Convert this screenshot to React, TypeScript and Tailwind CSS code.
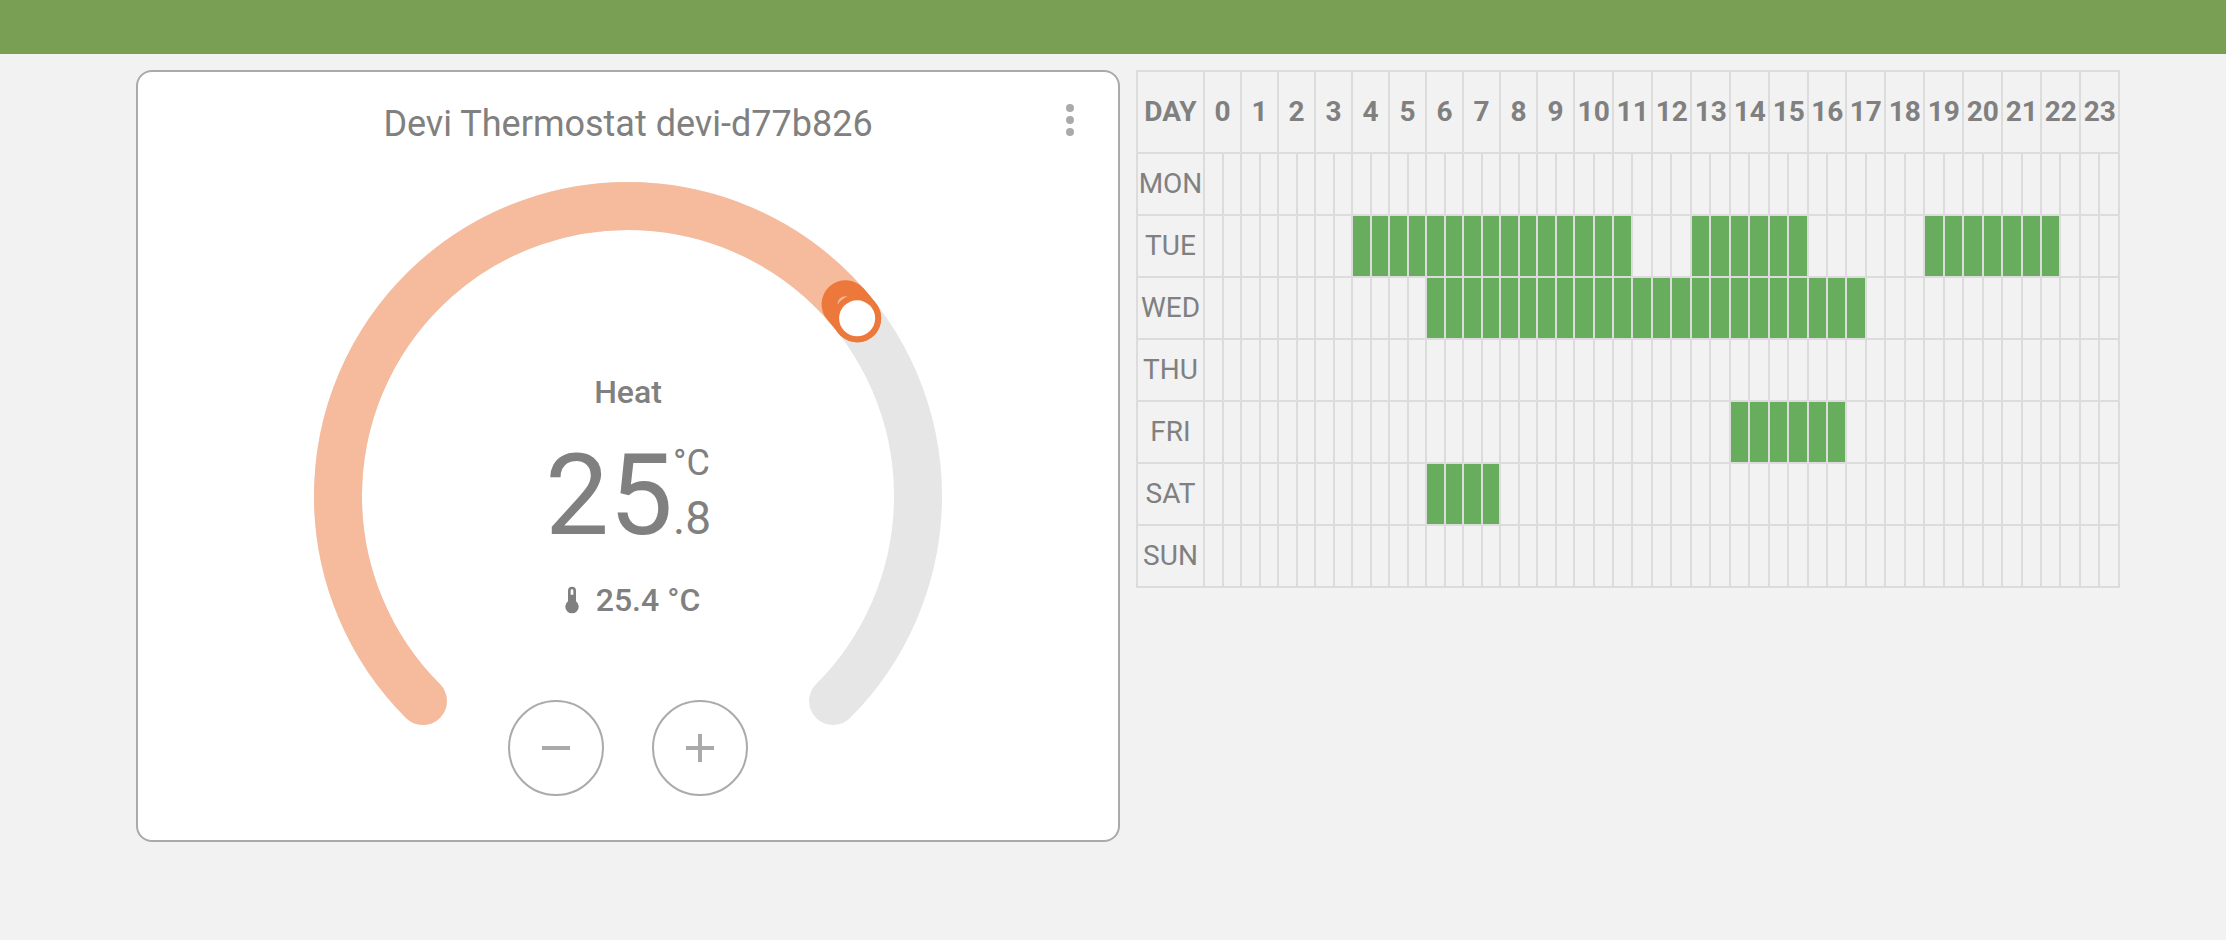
import React from "react";

const DAYS = ["MON", "TUE", "WED", "THU", "FRI", "SAT", "SUN"];
const HOURS = Array.from({ length: 24 }, (_, h) => h);

// Heating periods as [from, to) in half hours since midnight
const PERIODS: Record<string, [number, number][]> = {
  TUE: [[8, 23], [26, 32], [38, 45]],
  WED: [[12, 35]],
  FRI: [[28, 34]],
  SAT: [[12, 16]],
};

const isOn = (day: string, slot: number) =>
  (PERIODS[day] ?? []).some(([from, to]) => slot >= from && slot < to);

const MIN = 5;
const MAX = 35;
const TARGET = 25.8;
const CURRENT = 25.4;
const RADIUS = 145;

function point(value: number) {
  const angle = ((135 + (270 * (value - MIN)) / (MAX - MIN)) * Math.PI) / 180;
  return { x: 160 + RADIUS * Math.cos(angle), y: 160 + RADIUS * Math.sin(angle) };
}

function arc(from: number, to: number) {
  const a = point(from);
  const b = point(to);
  const large = (270 * (to - from)) / (MAX - MIN) > 180 ? 1 : 0;
  return `M ${a.x} ${a.y} A ${RADIUS} ${RADIUS} 0 ${large} 1 ${b.x} ${b.y}`;
}

function Dial() {
  const target = point(TARGET);
  const current = point(CURRENT);
  return (
    <svg viewBox="0 0 320 320" className="col-start-1 row-start-1 w-full" fill="none" strokeLinecap="round" strokeWidth="24" aria-hidden="true">
      <path d={arc(MIN, MAX)} stroke="#e6e6e6" />
      <path d={arc(MIN, TARGET)} stroke="#f6bb9d" />
      <path d={arc(CURRENT, TARGET)} stroke="#ed783b" />
      <circle cx={current.x} cy={current.y} r="4" fill="#f6bb9d" stroke="none" />
      <circle cx={target.x} cy={target.y} r="12" fill="#ed783b" stroke="none" />
      <circle cx={target.x} cy={target.y} r="9" fill="#ffffff" stroke="none" />
    </svg>
  );
}

function Icon({ d, className }: { d: string; className: string }) {
  return (
    <svg viewBox="0 0 24 24" fill="currentColor" className={className} aria-hidden="true">
      <path d={d} />
    </svg>
  );
}

function RoundButton({ label, d }: { label: string; d: string }) {
  return (
    <button type="button" aria-label={label} className="flex size-24 items-center justify-center rounded-full border-2 border-[#aaaaaa] text-[#aaaaaa]">
      <Icon d={d} className="size-12" />
    </button>
  );
}

function ThermostatCard() {
  return (
    <section className="relative flex flex-col items-center gap-7 rounded-2xl border-2 border-[#aaaaaa] bg-white px-6 pt-7 pb-6">
      <h2 className="text-4xl leading-[48px]">Devi Thermostat devi-d77b826</h2>
      <button type="button" aria-label="More options" className="absolute top-0 right-0 flex size-24 items-center justify-center text-[#aaaaaa]">
        <Icon
          className="size-12"
          d="M12 16a2 2 0 0 1 2 2a2 2 0 0 1-2 2a2 2 0 0 1-2-2a2 2 0 0 1 2-2m0-6a2 2 0 0 1 2 2a2 2 0 0 1-2 2a2 2 0 0 1-2-2a2 2 0 0 1 2-2m0-6a2 2 0 0 1 2 2a2 2 0 0 1-2 2a2 2 0 0 1-2-2a2 2 0 0 1 2-2Z"
        />
      </button>
      <div className="grid w-full max-w-[640px]">
        <Dial />
        <div className="z-10 col-start-1 row-start-1 flex flex-col items-center justify-center gap-[26px]">
          <p className="text-[32px] leading-[40px] font-medium">Heat</p>
          <p className="flex items-center pb-0.5">
            <span className="text-[114px] leading-[114px]">25</span>
            <span className="flex flex-col gap-[14px] pb-1">
              <span className="text-4xl leading-9">°C</span>
              <span className="text-[46px] leading-[46px]">.8</span>
            </span>
          </p>
          <p className="flex items-center gap-2 text-[32px] leading-[40px] font-medium">
            <Icon
              className="size-8"
              d="M15 13V5A3 3 0 0 0 9 5V13A5 5 0 1 0 15 13M12 4A1 1 0 0 1 13 5V8H11V5A1 1 0 0 1 12 4Z"
            />
            25.4 °C
          </p>
        </div>
        <div className="z-10 col-start-1 row-start-1 flex gap-12 self-end justify-self-center pb-5">
          <RoundButton label="Decrease temperature" d="M19 13H5V11H19V13Z" />
          <RoundButton label="Increase temperature" d="M19 13H13V19H11V13H5V11H11V5H13V11H19V13Z" />
        </div>
      </div>
    </section>
  );
}

// Two-digit hours need slightly wider columns
function slotWidth(slot: number) {
  if (slot < 20) return slot % 2 ? "w-[18px]" : "w-[19px]";
  if (slot === 32 || slot === 33) return "w-[19px]";
  const wideFirst = slot < 22 || (slot >= 34 && slot < 44);
  return (slot % 2 === 0) === wideFirst ? "w-[20px]" : "w-[19px]";
}

function Schedule() {
  const line = "border-[#dcdcdc] border-r-2 border-b-2 p-0";
  return (
    <table className="w-full table-fixed border-separate border-spacing-0 text-center text-[28px] leading-8">
      <colgroup>
        <col className="w-[69px]" />
        {Array.from({ length: 48 }, (_, slot) => (
          <col key={slot} className={slotWidth(slot)} />
        ))}
      </colgroup>
      <thead>
        <tr className="h-[84px]">
          <th scope="col" className={`${line} border-t-2 border-l-2 font-bold`}>DAY</th>
          {HOURS.map((h) => (
            <th key={h} scope="col" colSpan={2} className={`${line} border-t-2 font-bold`}>{h}</th>
          ))}
        </tr>
      </thead>
      <tbody>
        {DAYS.map((day) => (
          <tr key={day} className="h-[62px]">
            <th scope="row" className={`${line} border-l-2 font-normal`}>{day}</th>
            {Array.from({ length: 48 }, (_, slot) => (
              <td key={slot} className={isOn(day, slot) ? `${line} bg-[#68ad5d]` : line} />
            ))}
          </tr>
        ))}
      </tbody>
    </table>
  );
}

export default function App() {
  return (
    <div className="min-h-screen bg-[#f2f2f2] font-['Roboto',sans-serif] text-[#808080]">
      <header className="h-[54px] bg-[#799f54]" />
      <main className="grid grid-cols-2 items-start gap-4 pt-4 pr-[106px] pb-8 pl-[136px]">
        <ThermostatCard />
        <Schedule />
      </main>
    </div>
  );
}
